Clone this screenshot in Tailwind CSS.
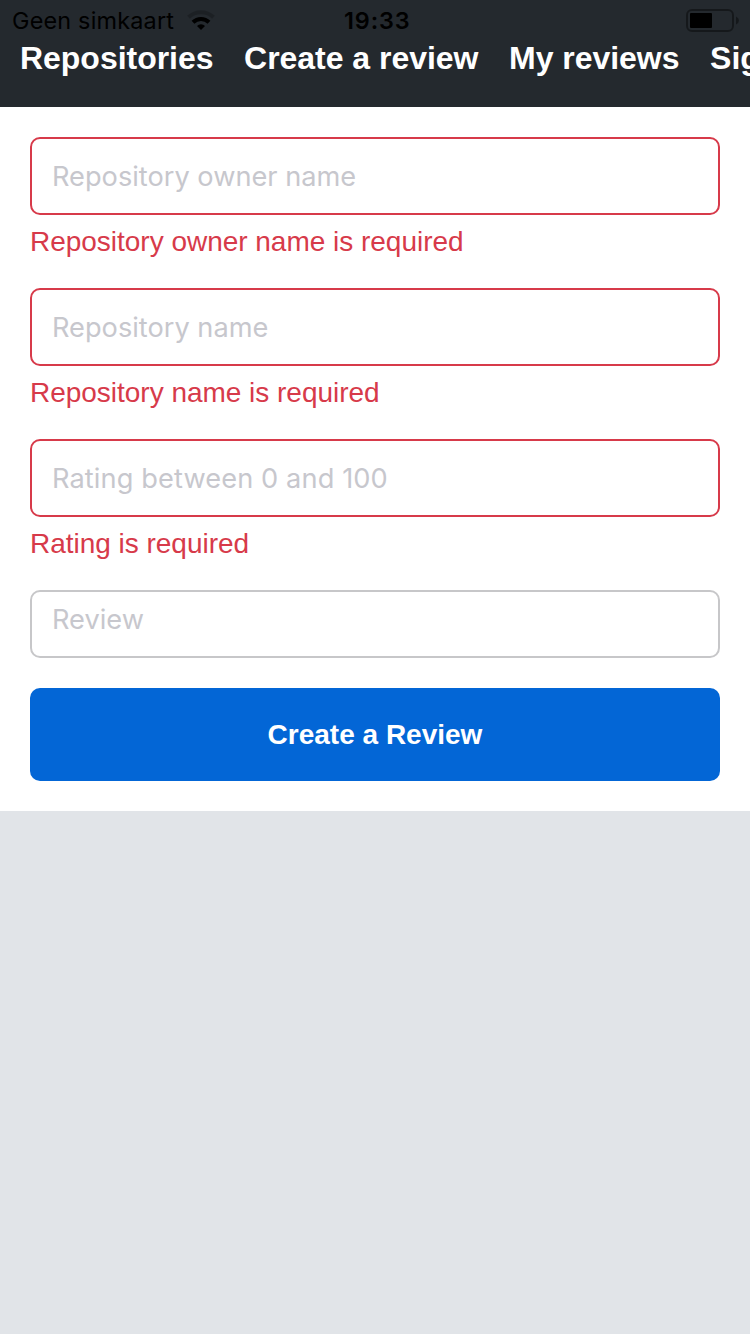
<!DOCTYPE html>
<html lang="en"><head><meta charset="utf-8"><title>Create a review</title>
<script src="https://cdn.jsdelivr.net/npm/@tailwindcss/browser@4"></script></head>
<body class="h-[1334px] w-[750px] overflow-hidden bg-[#e1e4e8] font-['Liberation_Sans',sans-serif]">
<header class="h-[107px] overflow-hidden bg-[#24292e]">
<div class="flex h-10 items-center pl-3 pr-[11px] font-[Inter,sans-serif] text-[23.4px] text-black">
<div class="flex w-[332px] items-center gap-[13px]"><span class="whitespace-nowrap pt-0.5 leading-10 tracking-[0.2px]">Geen simkaart</span>
<svg class="h-5 w-7" viewBox="0 0 28 20"><g fill="none" stroke-width="4"><path d="M1.500 7.300a18 18 0 0 1 25 0" stroke="#000" stroke-opacity=".2"/><path d="M6 12.300a11.500 11.500 0 0 1 16 0" stroke="#000"/></g><path d="M14 20l-4-4a5.700 5.700 0 0 1 8 0z"/></svg></div>
<span class="pt-0.5 font-semibold leading-10 tracking-[0.9px]">19:33</span>
<svg class="ml-auto h-[23px] w-[53px] shrink-0" viewBox="0 0 53 23"><rect x="1" y="1" width="46" height="21" rx="5" fill="none" stroke="#000" stroke-opacity=".4" stroke-width="2"/><rect x="4" y="4" width="22" height="15" rx="1"/><path d="M50 7.500q3 1.500 3 4t-3 4z" fill-opacity=".4"/></svg></div>
<nav class="flex gap-[30.6px] whitespace-nowrap pl-5 text-[32px] leading-9 tracking-[-0.03px] font-bold text-white"><span>Repositories</span><span>Create a review</span><span>My reviews</span><span>Sign out</span></nav>
</header>
<main class="h-[704px] bg-white px-[30px] pt-[30px]">
<div class="h-[151px]"><div class="flex h-[78px] items-center rounded-[10px] border-2 border-[#d73a4a] px-5 pt-[3px] font-[Inter,sans-serif] text-[27.2px] text-[#c7c7cd]">Repository owner name</div><p class="pt-[11px] text-[28px] leading-8 tracking-[-0.02px] text-[#d73a4a]">Repository owner name is required</p></div>
<div class="h-[151px]"><div class="flex h-[78px] items-center rounded-[10px] border-2 border-[#d73a4a] px-5 pt-[3px] font-[Inter,sans-serif] text-[27.2px] text-[#c7c7cd]">Repository name</div><p class="pt-[11px] text-[28px] leading-8 tracking-[-0.02px] text-[#d73a4a]">Repository name is required</p></div>
<div class="h-[151px]"><div class="flex h-[78px] items-center rounded-[10px] border-2 border-[#d73a4a] px-5 pt-[3px] font-[Inter,sans-serif] text-[27.2px] tracking-[0.11px] text-[#c7c7cd]">Rating between 0 and 100</div><p class="pt-[11px] text-[28px] leading-8 tracking-[-0.02px] text-[#d73a4a]">Rating is required</p></div>
<div class="h-[68px] rounded-[10px] border-2 border-[#c7c7c9] px-5 pt-[10px] font-[Inter,sans-serif] text-[27.2px] leading-9 text-[#c7c7cd]">Review</div>
<button class="mt-[30px] flex h-[93px] w-full items-center justify-center rounded-[10px] bg-[#0366d6] text-[28px] font-bold text-white">Create a Review</button>
</main></body></html>
